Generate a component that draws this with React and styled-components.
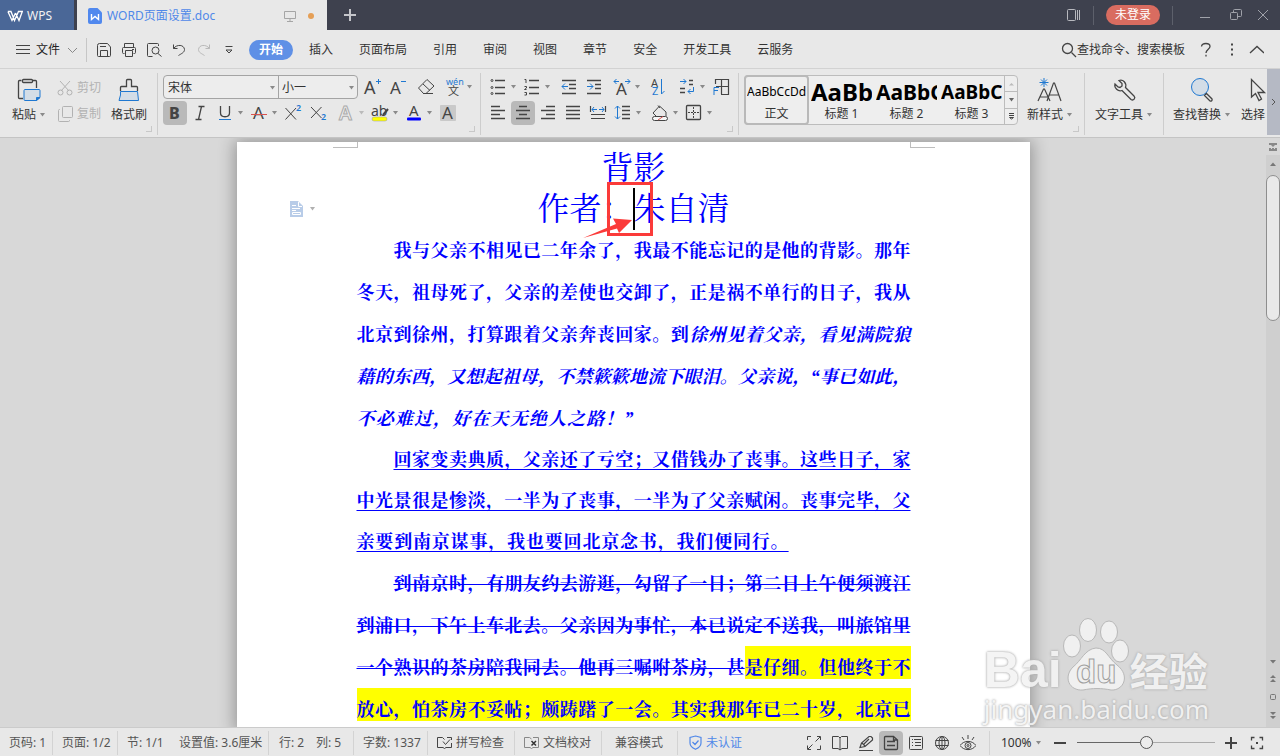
import React from 'react';
import styled, { createGlobalStyle, css } from 'styled-components';

const UI = '"Noto Sans", "Noto Sans CJK SC", sans-serif';
const INK = '#444444';
const BLUE = '#1f78d1';

const Global = createGlobalStyle`
  * { box-sizing: border-box; }
  html, body, #root { height: 100%; }
  body { margin: 0; font: 12px/18px ${UI}; color: #333; overflow: hidden; }
  button, input, select { font: inherit; color: inherit; }
  button { border: 0; padding: 0; background: none; cursor: default; white-space: nowrap; }
`;

const Shell = styled.div`
  display: flex;
  flex-direction: column;
  height: 100vh;
  background: #d8d8d8;
`;

/* ---------- icons ---------- */
const Svg = styled.svg`
  display: block;
  flex: none;
  fill: none;
  stroke: ${p => p.$c || INK};
  stroke-width: ${p => p.$sw || 1};
  text { stroke: none; fill: ${p => p.$c || INK}; font-family: "Noto Sans", "Noto Sans CJK SC", sans-serif; }
`;
const Ic = ({ s = 24, w, h, c, sw, children }) => (
  <Svg width={w || s} height={h || s} viewBox={`0 0 ${w || s} ${h || s}`} $c={c} $sw={sw} aria-hidden="true">{children}</Svg>
);
const CaretBox = styled.svg`display: block; flex: none; fill: ${p => p.$c || '#8a8a8a'};`;
const Caret = ({ c }) => (
  <CaretBox width="7" height="6" viewBox="0 0 7 6" $c={c} aria-hidden="true"><path d="M1 1h5L3.500 4.500z" /></CaretBox>
);

/* ---------- title bar ---------- */
const TitleBar = styled.header`
  display: flex;
  flex: none;
  height: 30px;
  background: #3e414e;
`;
const WpsButton = styled.button`
  display: flex;
  align-items: center;
  gap: 4px;
  width: 74px;
  padding: 2px 0 0 7px;
  background: #4a6797;
  color: #f2f2f2;
`;
const DocTab = styled.div`
  display: flex;
  align-items: center;
  width: 250px;
  margin-left: 3px;
  padding: 2px 13px 0 11px;
  background: #e8e8e8;
  color: #5088e8;
`;
const TabName = styled.span`flex: 1; margin-left: 5px;`;
const Dot = styled.span`
  width: 6px;
  height: 6px;
  margin-left: 12px;
  border-radius: 3px;
  background: #e59f56;
`;
const TitleButton = styled.button`
  display: grid;
  place-items: center;
  width: ${p => p.$w || 30}px;
`;
const TitleRight = styled.div`
  display: flex;
  align-items: center;
  margin-left: auto;
`;
const TitleRule = styled.span`
  width: 1px;
  height: 19px;
  margin: 0 12px;
  background: #5d606b;
`;
const Login = styled.button`
  width: 54px;
  height: 20px;
  border-radius: 10px;
  background: #d96c60;
  color: #fff;
`;

/* ---------- menu bar ---------- */
const MenuBar = styled.nav`
  display: flex;
  align-items: center;
  flex: none;
  height: 39px;
  padding: 1px 12px 0 15px;
  background: #e8e8e8;
  border-bottom: 1px solid #d2d2d2;
`;
const FileButton = styled.button`
  display: flex;
  align-items: center;
  gap: 5px;
  color: #222;
`;
const Rule = styled.span`
  flex: none;
  width: 1px;
  height: 24px;
  margin: 0 4px 0 7px;
  background: #c6c6c6;
`;
const QuickButton = styled.button`
  display: grid;
  place-items: center;
  width: 25px;
  height: 24px;
`;
const Tabs = styled.div`
  display: flex;
  gap: 6px;
  margin-left: 8px;
`;
const MenuTab = styled.button`
  height: 20px;
  padding: 0 10px;
  border-radius: 10px;
  ${p => p.$active && css`background: #5f90e6; color: #fff; font-weight: 700;`}
`;
const Search = styled.label`
  display: flex;
  align-items: center;
  margin-left: auto;
  input {
    width: 116px;
    border: 0;
    padding: 0;
    background: none;
    outline: 0;
  }
  input::placeholder { color: #333; opacity: 1; }
`;

/* ---------- ribbon ---------- */
const Ribbon = styled.section`
  display: flex;
  flex: none;
  height: 69px;
  background: #e8e8e8;
  border-bottom: 1px solid #c4c4c4;
  overflow: hidden;
`;
const Group = styled.div`
  position: relative;
  display: flex;
  flex: ${p => (p.$w ? 'none' : '1')};
  width: ${p => (p.$w ? p.$w + 'px' : 'auto')};
  min-width: 0;
  height: 62px;
  margin-top: 4px;
  padding: 2px 0 0 ${p => p.$pl || 5}px;
  overflow: hidden;
  ${p => p.$w && css`border-right: 1px solid #cdcdcd;`}
  ${p => p.$corner && css`
    &::after {
      content: '';
      position: absolute;
      right: 5px;
      bottom: 3px;
      width: 5px;
      height: 5px;
      border: solid #c8c8c8;
      border-width: 0 1px 1px 0;
    }
  `}
`;
const Big = styled.button`
  display: flex;
  flex-direction: column;
  align-items: center;
  gap: 2px;
  flex: none;
  width: ${p => p.$w}px;
  height: 50px;
`;
const BigLabel = styled.span`
  display: flex;
  align-items: center;
  gap: 3px;
  line-height: 20px;
`;
const Rows = styled.div`
  display: flex;
  flex-direction: column;
  gap: 2px;
`;
const Row = styled.div`
  display: flex;
  align-items: center;
  height: 24px;
`;
const ClipButton = styled.button`
  display: flex;
  align-items: center;
  gap: 3px;
  width: 53px;
  height: 24px;
  padding-top: 1px;
  color: #b2b2b2;
`;
const ToolBox = styled.button`
  display: flex;
  align-items: center;
  flex: none;
  width: ${p => p.$w}px;
  height: 24px;
`;
const Face = styled.span`
  border-radius: 4px;
  background: ${p => (p.$on ? '#b9b9b9' : 'none')};
`;
const Tool = ({ w = 25, on, caret, cc, label, children }) => (
  <ToolBox $w={w} aria-label={label} aria-pressed={on}>
    <Face $on={on}><Ic>{children}</Ic></Face>
    {caret && <Caret c={cc} />}
  </ToolBox>
);
const FontBox = styled.div`
  display: flex;
  width: 195px;
  height: 24px;
  margin-right: 2px;
  border: 1px solid #a4a4a4;
  border-radius: 4px;
  background: #ededed;
`;
const Pick = styled.label`
  display: flex;
  align-items: center;
  width: ${p => p.$w}px;
  padding: 1px 2px 0 4px;
  & + & { border-left: 1px solid #a4a4a4; padding-left: 3px; }
  select {
    flex: 1;
    min-width: 0;
    border: 0;
    padding: 0;
    background: none;
    appearance: none;
    outline: 0;
  }
`;
const Gallery = styled.div`
  display: flex;
  flex: none;
  width: 274px;
  height: 50px;
  border: 1px solid #bcbcbc;
  border-radius: 4px;
  background: #eeeeee;
`;
const StyleCell = styled.button`
  display: flex;
  flex-direction: column;
  width: 65px;
  margin: -1px 0 -1px ${p => (p.$on ? '-1px' : '0')};
  padding: 1px ${p => (p.$on ? '1px' : '0')};
  border: 2px solid ${p => (p.$on ? '#b9b9b9' : 'transparent')};
  border-radius: 4px;
  overflow: hidden;
`;
const Sample = styled.span`
  display: block;
  flex: none;
  height: 28px;
  width: 100%;
  overflow: hidden;
  text-align: left;
  color: #000;
  font-size: ${p => p.$size}px;
  font-weight: ${p => (p.$size > 12 ? 700 : 400)};
  line-height: 28px;
`;
const StyleName = styled.span`width: 100%; text-align: center; line-height: 16px;`;
const Scroller = styled.div`
  display: flex;
  flex-direction: column;
  width: 13px;
  margin-left: auto;
  border-left: 1px solid #bcbcbc;
  button {
    display: grid;
    place-items: center;
    flex: 1;
  }
  button + button { border-top: 1px solid #bcbcbc; }
`;
const More = styled.button`
  display: grid;
  place-items: center;
  flex: none;
  width: 13px;
  height: 66px;
  background: #b5b9c4;
`;

/* ---------- document ---------- */
const Work = styled.main`
  position: relative;
  display: flex;
  flex: 1;
  min-height: 0;
  overflow: hidden;
`;
const Desk = styled.div`
  flex: 1;
  min-width: 0;
  padding-top: 4px;
  overflow: hidden;
`;
const Page = styled.article`
  position: relative;
  width: 793px;
  max-width: 100%;
  min-height: 100%;
  margin: 0 auto;
  padding: 0 119px 0 120px;
  background: #fff;
  box-shadow: 0 0 16px 2px rgba(0, 0, 0, 0.32);
  color: #0000ff;
  font-family: "Liberation Serif", "Noto Serif CJK SC", "Noto Sans CJK SC", serif;
`;
const Marks = styled.div`
  display: flex;
  justify-content: space-between;
  height: 6px;
  margin: 0 -24px;
  &::before, &::after {
    content: '';
    width: 24px;
    border-bottom: 1px solid #bdbdbd;
  }
  &::before { border-right: 1px solid #bdbdbd; }
  &::after { border-left: 1px solid #bdbdbd; }
`;
const Heading = styled.h1`
  position: relative;
  margin: 0;
  font-size: 32px;
  font-weight: 400;
  line-height: 41px;
  text-align: center;
`;
const Para = styled.p`
  margin: 0;
  font-size: 18px;
  font-weight: 700;
  line-height: ${p => (p.$underline ? 41 : 42)}px;
  text-indent: 37px;
  text-align: justify;
  text-align-last: justify;
  text-decoration: ${p => (p.$underline ? 'underline 1px' : 'none')};
  text-decoration-skip-ink: none;
  text-underline-offset: 3px;
`;
const ClosingLine = styled.span`
  display: block;
  width: ${p => p.$part}%;
  text-indent: 0;
`;
const Italic = styled.em`font-style: italic;`;
const Strike = styled.s`text-decoration: line-through 1px;`;
const Marked = styled.mark`
  padding: 12px 0 1px;
  background: #ffff00;
  color: inherit;
`;
const TextCursor = styled.span`
  position: absolute;
  top: -1px;
  left: calc(50% - 1px);
  width: 2px;
  height: 42px;
  background: #000;
`;
const Callout = styled.svg`
  position: absolute;
  top: -7px;
  left: calc(50% - 52px);
`;
const SmartTag = styled.button`
  position: absolute;
  top: 59px;
  left: 53px;
  display: flex;
  align-items: center;
  gap: 6px;
`;
const ScrollBar = styled.aside`
  display: flex;
  flex-direction: column;
  align-items: center;
  width: 14px;
  background: #cfcfcf;
`;
const Thumb = styled.span`
  width: 14px;
  height: 146px;
  border: 1px solid #8e8e8e;
  border-radius: 7px;
  background: #e9e9e9;
`;
const ScrollEnd = styled.div`margin-top: auto;`;

const Watermark = styled.div`
  position: absolute;
  right: 71px;
  bottom: 0;
  color: #f3f3f3;
  opacity: 0.9;
  text-shadow: 0 0 2px #aaa, 0 0 3px #b5b5b5;
  pointer-events: none;
`;
const MarkTop = styled.div`
  display: flex;
  align-items: flex-end;
  height: 76px;
  gap: 1px;
`;
const MarkBai = styled.span`
  font: 700 50px/54px "Liberation Sans", sans-serif;
  margin-bottom: -6px;
`;
const MarkJing = styled.span`
  font: 700 39px/44px "Noto Sans CJK SC", sans-serif;
`;
const MarkUrl = styled.div`
  font: 26px/36px "Noto Sans", sans-serif;
`;

/* ---------- status bar ---------- */
const Status = styled.footer`
  display: flex;
  align-items: center;
  flex: none;
  height: 29px;
  padding: 1px 10px 0 9px;
  background: #e8e8e8;
  border-top: 1px solid #cbcbcb;
  color: #555;
  white-space: nowrap;
`;
const Info = styled.span`
  flex: none;
  display: flex;
  align-items: center;
  gap: 4px;
  width: ${p => p.$w}px;
  height: 24px;
  padding-left: ${p => p.$pl || 0}px;
  color: ${p => p.$c || 'inherit'};
  ${p => p.$rule && css`border-right: 1px solid #d3d3d3;`}
`;
const ViewButton = styled.button`
  display: grid;
  place-items: center;
  flex: none;
  width: ${p => (p.$on ? 24 : 26)}px;
  height: 24px;
  border-radius: 4px;
  background: ${p => (p.$on ? '#b9b9b9' : 'none')};
`;
const Views = styled.div`
  display: flex;
  align-items: center;
  margin-left: auto;
  padding-right: 8px;
  border-right: 1px solid #d3d3d3;
`;
const Zoom = styled.button`
  display: flex;
  align-items: center;
  gap: 3px;
  width: 46px;
  margin-left: 11px;
  color: #333;
`;
const Slider = styled.input`
  appearance: none;
  width: 138px;
  height: 13px;
  margin: 0 3px 0 4px;
  background: linear-gradient(90deg, #666 50%, #aaa 50%) center / 100% 1px no-repeat;
  &::-webkit-slider-thumb {
    appearance: none;
    width: 13px;
    height: 13px;
    border: 1px solid #555;
    border-radius: 7px;
    background: #ececec;
  }
`;

const lines = (...ys) => ys.map(([a, b, y]) => `M${a} ${y}H${b}`).join('');

export default function App() {
  return (
    <Shell>
      <Global />
      <TitleBar>
        <WpsButton>
          <Ic w={16} h={14} c="#fff" sw={1.3}><path d="M.8 2.500H4L7.500 11.500 11.500 2.500H15.300L12 11.500 8.500 4M1 2.800L5 11.500 8.500 4" /></Ic>
          WPS
        </WpsButton>
        <DocTab>
          <Ic w={14} h={16} c="#fff" sw={1.4}>
            <path d="M2 0H9.500L14 4.500V14a2 2 0 0 1-2 2H2a2 2 0 0 1-2-2V2A2 2 0 0 1 2 0z" fill="#5088ee" stroke="none" />
            <path d="M3.500 6V11.500L7 8.500 10.500 11.500V6" />
          </Ic>
          <TabName>WORD页面设置.doc</TabName>
          <Ic w={12} h={12} c="#a5a5a5"><path d="M.5 1.500H11.500V8.500H.5zM6 8.500V11.500M3 11.500H9" /></Ic>
          <Dot />
        </DocTab>
        <TitleButton $w={46} aria-label="新建">
          <Ic s={12} c="#c4c5ca" sw={2}><path d="M6 0V12M0 6H12" /></Ic>
        </TitleButton>
        <TitleRight>
          <Ic w={14} h={12} c="#b8b9bf"><rect x=".5" y=".5" width="8" height="11" rx="1" /><path d="M10.500 1V11M12.500 1V11" /></Ic>
          <TitleRule />
          <Login>未登录</Login>
          <TitleRule />
          <TitleButton $w={40} aria-label="最小化"><Ic s={12} c="#a0a2aa"><path d="M1 8.500H11" /></Ic></TitleButton>
          <TitleButton $w={21} aria-label="还原"><Ic s={12} c="#a0a2aa"><rect x=".5" y="3.500" width="7" height="7" rx="1" /><path d="M3.500 3.500V1.500a1 1 0 0 1 1-1H10.500a1 1 0 0 1 1 1V6.500a1 1 0 0 1-1 1H7.500" /></Ic></TitleButton>
          <TitleButton $w={34} aria-label="关闭"><Ic s={12} c="#a0a2aa"><path d="M1 1L11 11M11 1L1 11" /></Ic></TitleButton>
        </TitleRight>
      </TitleBar>

      <MenuBar>
        <FileButton>
          <Ic w={16} h={12}><path d={lines([1, 15, 1.5], [1, 15, 5.5], [1, 15, 9.5])} /></Ic>
          文件
          <Ic w={14} h={8} c="#888"><path d="M3 2L7.500 6.500 12 2" /></Ic>
        </FileButton>
        <Rule />
        <QuickButton aria-label="保存"><Ic s={16}><path d="M1.500 3.500V13.500a1 1 0 0 0 1 1H13.500a1 1 0 0 0 1-1V5L11.500 1.500H3.500a2 2 0 0 0-2 2zM4.500 14.500V8.500H11.500V14.500M4 4.500H10" /></Ic></QuickButton>
        <QuickButton aria-label="打印"><Ic s={16}><path d="M3.500 5.500V1.500H12.500V5.500M3.500 11.500H2.500a1 1 0 0 1-1-1V6.500a1 1 0 0 1 1-1H13.500a1 1 0 0 1 1 1V10.500a1 1 0 0 1-1 1H12.500M4.500 8.500H11.500V14.500H4.500zM11 7.500h2" /></Ic></QuickButton>
        <QuickButton aria-label="打印预览"><Ic s={16}><path d="M6.500 14.500H2.500a1 1 0 0 1-1-1V2.500a1 1 0 0 1 1-1H11.500a1 1 0 0 1 1 1V4M12 11.500L15.500 14.500" /><circle cx="9.500" cy="8.500" r="3.500" /></Ic></QuickButton>
        <QuickButton aria-label="撤销"><Ic s={16}><path d="M2.500 2.500V6.500H6.500M2.500 6.500C6 2 13 2.500 13.500 7.500C13.500 10.500 10.500 11.500 7.500 13.500" /></Ic></QuickButton>
        <QuickButton aria-label="恢复"><Ic s={16} c="#b8b8b8"><path d="M13.500 2.500V6.500H9.500M13.500 6.500C10 2 3 2.500 2.500 7.500C2.500 10.500 5.500 11.500 8.500 13.500" /></Ic></QuickButton>
        <QuickButton aria-label="更多"><Ic s={12}><path d="M2.500 2.500H9.500M3 6L6 9 9 6z" /></Ic></QuickButton>
        <Tabs>
          {['开始', '插入', '页面布局', '引用', '审阅', '视图', '章节', '安全', '开发工具', '云服务'].map((t, i) => (
            <MenuTab key={t} $active={i === 0}>{t}</MenuTab>
          ))}
        </Tabs>
        <Search>
          <Ic s={16} sw={1.3}><circle cx="6.500" cy="6.500" r="5" /><path d="M10.500 10.500L15 15" /></Ic>
          <input type="text" placeholder="查找命令、搜索模板" aria-label="查找命令、搜索模板" />
        </Search>
        <QuickButton aria-label="帮助"><Ic s={16} sw={1.3}><path d="M3.500 4.500C4 .5 12 .5 12 4.500C12 7 8 7.500 8 11M8 12.800V14.500" /></Ic></QuickButton>
        <QuickButton aria-label="选项"><Ic s={16}><path d="M8 2.500h2M8 7.500h2M8 12.500h2" strokeWidth="2" /></Ic></QuickButton>
        <QuickButton aria-label="收起功能区"><Ic s={16} sw={1.3}><path d="M2 11L9 4.500 16 11" /></Ic></QuickButton>
      </MenuBar>

      <Ribbon>
        <Group $w={158} $pl={7} $corner>
          <Big $w={44}>
            <Ic s={28}>
              <path d="M8 23.500H4.500a1 1 0 0 1-1-1V6.500a1 1 0 0 1 1-1H6.500M18 5.500H20.500a1 1 0 0 1 1 1V13" strokeWidth="1.300" />
              <rect x="7.500" y="4.500" width="10" height="3" rx="1" strokeWidth="1.300" />
              <path d="M10 14.500H24a1 1 0 0 1 1 1V22.500L21.500 25.500H10a1 1 0 0 1-1-1V15.500a1 1 0 0 1 1-1z" fill="#d3dde7" stroke={BLUE} />
              <path d="M25 22.500H21.500V25.500z" fill={BLUE} stroke={BLUE} />
            </Ic>
            <BigLabel>粘贴<Caret /></BigLabel>
          </Big>
          <Rows>
            <ClipButton>
              <Ic w={23} h={18} c="#b2b2b2"><path d="M9 2L18 12M19 2L10 12" /><circle cx="9.500" cy="13.500" r="2.500" /><circle cx="18.500" cy="13.500" r="2.500" /></Ic>
              剪切
            </ClipButton>
            <ClipButton>
              <Ic w={23} h={18} c="#b2b2b2"><rect x="11.500" y="1.500" width="10" height="11" rx="1" /><path d="M9 4.500H8.500a1 1 0 0 0-1 1V15.500a1 1 0 0 0 1 1H17.500a1 1 0 0 0 1-1V15" /></Ic>
              复制
            </ClipButton>
          </Rows>
          <Big $w={50}>
            <Ic s={28}>
              <path d="M5.500 16V12.500a1 1 0 0 1 1-1H11.500V5.500a1 1 0 0 1 1-1H15.500a1 1 0 0 1 1 1V11.500H21.500a1 1 0 0 1 1 1V16" strokeWidth="1.300" />
              <path d="M5.500 16.500H22.500L23.500 25.500H4L5.500 20z" fill="#d3dde7" stroke={BLUE} />
            </Ic>
            <BigLabel>格式刷</BigLabel>
          </Big>
        </Group>

        <Group $w={323} $corner>
          <Rows>
            <Row>
              <FontBox>
                <Pick $w={114}><select aria-label="字体"><option>宋体</option></select><Caret /></Pick>
                <Pick $w={79}><select aria-label="字号"><option>小一</option></select><Caret /></Pick>
              </FontBox>
              <Tool w={26} label="增大字号"><text x="4" y="19" fontSize="18">A</text><path d="M18.500 4V9M16 6.500H21" stroke={BLUE} /></Tool>
              <Tool w={28} label="减小字号"><text x="4" y="19" fontSize="17">A</text><path d="M15 6.500H20" stroke={BLUE} /></Tool>
              <Tool w={28} label="清除格式"><path d="M4.500 13L13 4.500 20 11 12 18.500H9.500zM9 9L16 15.500M9 18.500H19" /></Tool>
              <Tool w={34} caret label="拼音指南"><text x="4" y="10" fontSize="9" style={{ fill: BLUE }}>wén</text><text x="6" y="20" fontSize="11">文</text></Tool>
            </Row>
            <Row>
              <Tool on label="加粗"><text x="6" y="18" fontSize="16" fontWeight="800">B</text></Tool>
              <Tool label="倾斜"><path d="M10.500 5.500H16.500M7.500 18.500H13.500M13.500 5.500L10.500 18.500" strokeWidth="1.300" /></Tool>
              <Tool w={34} caret label="下划线"><path d="M7.500 5V12C7.500 17 16.500 17 16.500 12V5" strokeWidth="1.300" /><path d="M6 18.500H18" stroke={BLUE} /></Tool>
              <Tool w={34} caret label="删除线"><text x="6" y="18" fontSize="17">A</text><path d="M4 13.500H20" stroke="#d9534f" /></Tool>
              <Tool label="上标"><path d="M4.500 7L15 18.500M15 7L4.500 18.500" /><text x="15" y="10" fontSize="9" fontWeight="600" style={{ fill: BLUE }}>2</text></Tool>
              <Tool w={28} label="下标"><path d="M5 6L15.500 17M15.500 6L5 17" /><text x="15" y="19" fontSize="9" fontWeight="600" style={{ fill: BLUE }}>2</text></Tool>
              <Tool w={34} caret cc="#bbb" label="文字效果"><text x="5" y="19" fontSize="19" fontWeight="600" style={{ fill: '#eee', stroke: '#aaa' }}>A</text></Tool>
              <Tool w={34} caret label="突出显示"><text x="3" y="15" fontSize="14">ab</text><path d="M15 14L20 8" strokeWidth="2" /><rect x="4" y="16" width="15" height="4" rx="2" fill="#ff0" stroke="#999" strokeWidth=".5" /></Tool>
              <Tool w={34} caret label="字体颜色"><text x="7" y="15" fontSize="15">A</text><rect x="5" y="16.500" width="14" height="3" rx="1" fill="#00f" stroke="none" /></Tool>
              <Tool w={24} label="字符底纹"><rect x="4" y="4" width="16" height="16" rx="1" fill="#c9c9c9" stroke="none" /><text x="6" y="18" fontSize="17">A</text></Tool>
            </Row>
          </Rows>
        </Group>

        <Group $w={258} $corner>
          <Rows>
            <Row>
              <Tool w={34} caret label="项目符号"><path d={lines([9, 19, 5.5], [9, 19, 12.5], [9, 19, 18.5])} strokeWidth="1.300" /><circle cx="6" cy="5.500" r="1" /><circle cx="6" cy="12.500" r="1" /><circle cx="6" cy="18.500" r="1" /></Tool>
              <Tool w={37} caret label="编号"><path d={lines([9, 19, 5.5], [9, 19, 12.5], [9, 19, 18.5])} strokeWidth="1.300" /><path d="M4.500 4.500H6V8M4.500 11.500H6.500V13L4.500 14.500H6.500M4.500 17.500H6.500V20H4.500" /></Tool>
              <Tool label="减少缩进"><path d={lines([5, 19, 5.5], [12, 19, 9.5], [12, 19, 13.5], [5, 19, 18.5])} strokeWidth="1.300" /><path d="M5 11.500H11M8 8.500L5 11.500 8 14.500" stroke={BLUE} /></Tool>
              <Tool w={28} label="增加缩进"><path d={lines([5, 19, 5.5], [13, 19, 9.5], [13, 19, 13.5], [5, 19, 18.5])} strokeWidth="1.300" /><path d="M5 11.500H11M8 8.500L11 11.500 8 14.500" stroke={BLUE} /></Tool>
              <Tool w={36} caret label="中文版式"><text x="6" y="20" fontSize="17">A</text><path d="M4 6.500H9M6.500 4L4 6.500 6.500 9M15 6.500H20M17.500 4L20 6.500 17.500 9" stroke={BLUE} /></Tool>
              <Tool w={29} label="排序"><text x="5" y="12" fontSize="11">A</text><text x="6" y="20" fontSize="11" style={{ fill: BLUE }}>Z</text><path d="M15.500 4V19L18.500 16" stroke={BLUE} /></Tool>
              <Tool w={34} caret label="制表位"><path d="M14 5.500H18M14 9.500H18M5 13.500H10M5 17.500H10" strokeWidth="1.300" /><path d="M5 6.500H11M8.500 4L11 6.500 8.500 9M18.500 12V16.500H13M15.500 14L13 16.500 15.500 19" stroke={BLUE} /></Tool>
              <Tool w={24} label="插入表格"><path d="M6.500 9V4.500H19.500V19.500H12M12.500 4.500V19M7 11.500H19" strokeWidth="1.200" /><path d="M5 20V12.500H10M5 15.500H9" stroke={BLUE} /></Tool>
            </Row>
            <Row>
              <Tool label="左对齐"><path d={lines([5, 14, 5.5], [5, 19, 9.5], [5, 14, 13.5], [5, 19, 17.5])} strokeWidth="1.300" /></Tool>
              <Tool on label="居中对齐"><path d={lines([8, 16, 5.5], [5, 19, 9.5], [8, 16, 13.5], [5, 19, 17.5])} strokeWidth="1.300" /></Tool>
              <Tool label="右对齐"><path d={lines([10, 19, 5.5], [5, 19, 9.5], [10, 19, 13.5], [5, 19, 17.5])} strokeWidth="1.300" /></Tool>
              <Tool label="两端对齐"><path d={lines([5, 19, 5.5], [5, 19, 9.5], [5, 19, 13.5], [5, 19, 17.5])} strokeWidth="1.300" /></Tool>
              <Tool label="分散对齐"><path d={lines([5, 19, 13.5], [5, 19, 17.5]) + 'M4.500 5V11M19.500 5V11'} strokeWidth="1.200" /><path d="M6 8.500H11M8 6L6 8.500 8 11M13 8.500H18M16 6L18 8.500 16 11" stroke={BLUE} /></Tool>
              <Tool w={37} caret label="行距"><path d={lines([11, 19, 5.5], [11, 19, 9.5], [11, 19, 13.5], [11, 19, 17.5])} strokeWidth="1.300" /><path d="M6.500 5V18M4 7.500L6.500 5 9 7.500M4 15.500L6.500 18 9 15.500" stroke={BLUE} /></Tool>
              <Tool w={34} caret label="底纹"><path d="M5 12L11.500 5 18 11V15M5 12L8 15M10 4.500L12 7" /><rect x="4.500" y="15.500" width="15" height="4" rx="2" fill="#f6f6f6" /><path d="M10 19L15 15.500" stroke="#d9534f" /></Tool>
              <Tool w={34} caret label="边框"><rect x="4.500" y="4.500" width="14" height="14" rx="1" strokeWidth="1.300" /><path d="M11.500 6V18M6 11.500H18" strokeDasharray="2 1" /></Tool>
            </Row>
          </Rows>
        </Group>

        <Group $w={346} $corner>
          <Gallery>
            <StyleCell $on><Sample $size={12}>AaBbCcDd</Sample><StyleName>正文</StyleName></StyleCell>
            <StyleCell><Sample $size={24}>AaBb</Sample><StyleName>标题 1</StyleName></StyleCell>
            <StyleCell><Sample $size={21}>AaBbC</Sample><StyleName>标题 2</StyleName></StyleCell>
            <StyleCell><Sample $size={19}>AaBbCc</Sample><StyleName>标题 3</StyleName></StyleCell>
            <Scroller>
              <button aria-label="上一行"><CaretBox width="5" height="4" $c="#bbb"><path d="M0 3.500L2.500 1 5 3.500z" /></CaretBox></button>
              <button aria-label="下一行"><Caret c="#666" /></button>
              <button aria-label="更多样式"><Ic w={7} h={8}><path d="M1 1.500H6M1 3.500H6M1.500 5.500H5.500L3.500 7z" /></Ic></button>
            </Scroller>
          </Gallery>
          <Big $w={64}>
            <Ic s={28}>
              <path d="M2 26L7.500 14H8.500L14 26M4 22H12M11 26L17.500 8H18.500L25 26M13.500 20H22.500" strokeWidth="1.200" />
              <path d="M8 3V12M3.500 7.500H12.500M5 4.500L11 10.500M11 4.500L5 10.500" stroke={BLUE} />
            </Ic>
            <BigLabel>新样式<Caret /></BigLabel>
          </Big>
        </Group>

        <Group $w={79} $pl={8}>
          <Big $w={62}>
            <Ic s={28}><path d="M9 5.500L12 8.500V11L10 12.500 8 12 5 9C4 13 8 17 12 15.500L21 24.500C23.500 26 26 23 24 21L15.500 12.500C17 8 13 4 9 5.500z" strokeWidth="1.300" /></Ic>
            <BigLabel>文字工具<Caret /></BigLabel>
          </Big>
        </Group>

        <Group $pl={7}>
          <Big $w={62}>
            <Ic s={28}>
              <circle cx="12" cy="12" r="8.500" fill="#d3dde7" stroke={BLUE} />
              <path d="M18.500 18.500L24 24a1.500 1.500 0 0 1-2 2L16.500 20.500z" strokeWidth="1.300" />
            </Ic>
            <BigLabel>查找替换<Caret /></BigLabel>
          </Big>
          <Big $w={50}>
            <Ic s={28}><path d="M7.500 4.500V22L11.500 18.500 15 25.500 17.500 24 14 17.500H20.500z" strokeWidth="1.300" /></Ic>
            <BigLabel>选择<Caret /></BigLabel>
          </Big>
        </Group>
        <More aria-label="展开"><Ic w={6} h={8} c="#555"><path d="M1 1L4 4 1 7" /></Ic></More>
      </Ribbon>

      <Work>
        <Desk>
          <Page>
            <Marks />
            <SmartTag aria-label="粘贴选项">
              <Ic w={13} h={16} c="#fff">
                <path d="M0 0H8L13 5V16H0z" fill="#b8cce8" stroke="none" />
                <path d="M8.500 1V5.500H12M2 4.500H6M2 7.500H10M2 9.500H6M2.500 11.500H10.500V13.500H2.500z" />
              </Ic>
              <Caret c="#b0b0b0" />
            </SmartTag>
            <Heading>背影</Heading>
            <Heading as="h2">
              作者：朱自清
              <TextCursor />
              <Callout width="72" height="64" viewBox="0 0 72 64" aria-hidden="true">
                <rect x="26.500" y="1.500" width="43" height="51" fill="none" stroke="#fb3b3a" strokeWidth="3" />
                <path d="M1 56L34 42 31 36.500 50 38 37 51 35 46.500z" fill="#fb3b3a" />
              </Callout>
            </Heading>
            <Para>
              我与父亲不相见已二年余了，我最不能忘记的是他的背影。那年冬天，祖母死了，父亲的差使也交卸了，正是祸不单行的日子，我从北京到徐州，打算跟着父亲奔丧回家。到<Italic>徐州见着父亲，看见满院狼藉的东西，又想起祖母，不禁簌簌地流下眼泪。父亲说，“事已如此，</Italic>
              <ClosingLine as="em" $part={50}>不必难过，好在天无绝人之路！”</ClosingLine>
            </Para>
            <Para $underline>
              回家变卖典质，父亲还了亏空；又借钱办了丧事。这些日子，家中光景很是惨淡，一半为了丧事，一半为了父亲赋闲。丧事完毕，父
              <ClosingLine $part={78}>亲要到南京谋事，我也要回北京念书，我们便同行。</ClosingLine>
            </Para>
            <Para>
              <Strike>到南京时，有朋友约去游逛，勾留了一日；第二日上午便须渡江到浦口，下午上车北去。父亲因为事忙，本已说定不送我，叫旅馆里一个熟识的茶房陪我同去。他再三嘱咐茶房，甚</Strike><Marked>是仔细。但他终于不放心，怕茶房不妥帖；颇踌躇了一会。其实我那年已二十岁，北京已</Marked>
            </Para>
          </Page>
        </Desk>
        <ScrollBar>
          <Ic w={14} h={37} c="none">
            <path d="M0 0H14V17H0z" fill="#d8d8d8" />
            <path d="M3 5H11V7H9L7 9 5 7H3zM3 10h2v1h1v-1h2v1h1v-1h2v3H3z" fill="#888" />
            <path d="M4 28L7 24.500 10 28z" fill="#777" />
          </Ic>
          <Thumb />
          <ScrollEnd>
            <Ic w={14} h={70} c="none">
              <path d="M4 3H10L7 6.500zM4 21L7 18 10 21zM4 25L7 22 10 25zM4 55H10L7 58zM4 59H10L7 62z" fill="#777" />
              <rect x="4.500" y="37.500" width="5" height="5" rx="1" stroke="#777" />
            </Ic>
          </ScrollEnd>
        </ScrollBar>
        <Watermark>
          <MarkTop>
            <MarkBai>Bai</MarkBai>
            <Ic w={66} h={76} c="#b5b5b5">
              <g fill="#f3f3f3">
                <ellipse cx="9" cy="31" rx="8.500" ry="11" /><ellipse cx="25" cy="15" rx="8.500" ry="11.500" />
                <ellipse cx="46" cy="17" rx="8.500" ry="11" /><ellipse cx="57" cy="36" rx="8.500" ry="11" />
                <path d="M33 33C43 33 45 43 54 50C68 61 60 76 48 75C38 73 30 73 20 75C6 76 0 62 10 52C18 46 22 34 33 33z" />
              </g>
              <text x="13" y="68" fontSize="33" fontWeight="700" style={{ fill: '#f3f3f3', stroke: '#999', textShadow: 'none', fontFamily: 'Liberation Sans' }}>du</text>
            </Ic>
            <MarkJing>经验</MarkJing>
          </MarkTop>
          <MarkUrl>jingyan.baidu.com</MarkUrl>
        </Watermark>
      </Work>

      <Status>
        <Info $w={44} $rule>页码: 1</Info>
        <Info $w={65} $pl={9} $rule>页面: 1/2</Info>
        <Info $w={52} $pl={9}>节: 1/1</Info>
        <Info $w={99} $pl={9} $rule>设置值: 3.6厘米</Info>
        <Info $w={37} $pl={10}>行: 2</Info>
        <Info $w={48} $pl={10} $rule>列: 5</Info>
        <Info $w={74} $pl={9} $rule>字数: 1337</Info>
        <Info $w={87} $pl={9} $rule>
          <Ic w={15} h={14}><path d="M7.500 3.500L5.500 1.500H.5V11.500H6L7.500 12.500 9 11.500H14.500V7M10 1.500H14.500V4M6 5.500L8.500 8.500 13 3.500" /></Ic>拼写检查
        </Info>
        <Info $w={87} $pl={9} $rule>
          <Ic w={15} h={14} c="#888"><path d="M7.500 12.500L6 11.500H.5V1.500H5.500L7.500 3M9 1.500H14.500V11.500H9L7.500 12.500" /><path d="M7.500 5L12 9.500M12 5L7.500 9.500" stroke="#333" strokeWidth="1.500" /></Ic>文档校对
        </Info>
        <Info $w={76} $pl={13} $rule>兼容模式</Info>
        <Info $w={70} $pl={11} $c="#5088e8">
          <Ic w={13} h={15} c="#5088e8" sw={1.2}><path d="M6.500 1L12 2.500V8C12 11 9.500 13 6.500 14.300C3.500 13 1 11 1 8V2.500zM3.500 7L6 9.500 9.500 5.500" /></Ic>未认证
        </Info>
        <Views>
          <ViewButton aria-label="全屏"><Ic s={16}><path d="M1.500 5V1.500H5M11 1.500H14.500V5M14.500 10.500V14.500H11M5 14.500H1.500V10.500M9.500 6.500L14 2M6.500 9.500L2 14" /></Ic></ViewButton>
          <ViewButton aria-label="阅读版式"><Ic s={16}><path d="M8 3L6.500 1.500H.5V13.500H6L8 15 10 13.500H15.500V1.500H9.500zM8 3V15" /></Ic></ViewButton>
          <ViewButton aria-label="写作模式"><Ic s={16}><path d="M1 15.500H15M2 12.500L3.500 8 11 1.500H13L14.500 3V5L7 11.500zM4 8L7 11M11 4L6 9" strokeWidth="1.200" /></Ic></ViewButton>
          <ViewButton $on aria-label="页面视图"><Ic s={16}><path d="M1.500 2.500a1 1 0 0 1 1-1H10.500L14.500 5V13.500a1 1 0 0 1-1 1H2.500a1 1 0 0 1-1-1zM4 6.500H12M4 10.500H12M10.500 1.500V5H14" strokeWidth="1.300" /></Ic></ViewButton>
          <ViewButton aria-label="大纲"><Ic s={16}><rect x="1.500" y="1.500" width="13" height="13" rx="1" /><path d="M4 4.500h1M4 7.500h1M4 10.500h1M6 4.500H13M7 7.500H13M7 10.500H13" /></Ic></ViewButton>
          <ViewButton aria-label="Web 版式"><Ic s={16}><circle cx="8" cy="8" r="6.500" /><ellipse cx="8" cy="8" rx="3" ry="6.500" /><path d="M1.500 5.500H14.500M1.500 10.500H14.500M8 1.500V14.500" /></Ic></ViewButton>
          <ViewButton aria-label="护眼模式"><Ic s={16}><path d="M0 10.500C4 5 12 5 16 10.500C12 16 4 16 0 10.500zM8 0V4M2 2L4 5M14 2L12 5" /><circle cx="8" cy="10.500" r="3" /><circle cx="8" cy="10.500" r="1" /></Ic></ViewButton>
        </Views>
        <Zoom>100%<Caret /></Zoom>
        <ViewButton aria-label="缩小"><Ic s={12} sw={2}><path d="M0 6H12" /></Ic></ViewButton>
        <Slider type="range" min="0" max="100" defaultValue="50" aria-label="缩放" />
        <ViewButton aria-label="放大"><Ic s={12} sw={2}><path d="M0 6H12M6 0V12" /></Ic></ViewButton>
        <ViewButton aria-label="适合窗口"><Ic s={14}><path d="M1.500 4.500V1.500H4.500M9.500 1.500H12.500V4.500M12.500 9.500V12.500H9.500M4.500 12.500H1.500V9.500" strokeWidth="1.300" /><path d="M6 7h2" strokeWidth="2" /></Ic></ViewButton>
      </Status>
    </Shell>
  );
}
